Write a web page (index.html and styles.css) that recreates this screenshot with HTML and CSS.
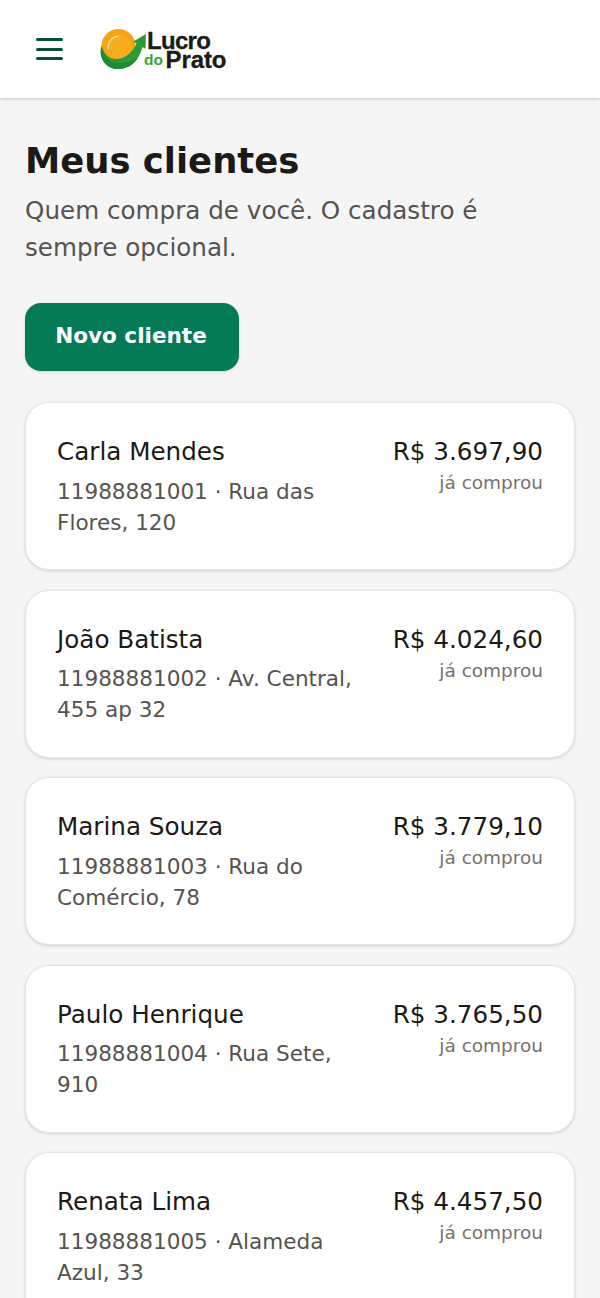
FILE: index.html
```html
<!DOCTYPE html>
<html lang="pt-BR">
<head>
  <meta charset="UTF-8" />
  <meta name="viewport" content="width=device-width, initial-scale=1.0"/>
  <title>Meus clientes</title>
  <link rel="stylesheet" href="styles.css">
</head>
<body>
  <header class="topbar">
    <button class="menu-btn" aria-label="Menu">
      <span></span><span></span><span></span>
    </button>
    <div class="logo">
      <svg class="logo-mark" viewBox="0 0 48 42" width="48" height="42" aria-hidden="true">
        <circle cx="19.5" cy="18" r="17" fill="#f6a313"/>
        <circle cx="20" cy="19" r="12.5" fill="#fbab1e"/>
        <path d="M9.5 21C8.5 14 13 8.5 20 8" fill="none" stroke="#fde3a4" stroke-width="1.2"/>
        <path d="M2.5 18C-1 30 7 41 19 41C31 41 40 33 43.5 19L46.5 21L47 6L34 13.7L37.5 15.5C33 25 26 31 17 31C10 31 5 26 2.5 18Z" fill="#2f9a36"/>
        <path d="M2.5 18C-1 30 7 41 19 41C28 41 34 37 39 30C32 34 20 37 12 33C7 30 4 25 2.5 18Z" fill="#1f8a34"/>
      </svg>
      <div class="logo-text">
        <div class="logo-top">Lucro</div>
        <div class="logo-bottom"><span class="logo-do">do</span>Prato</div>
      </div>
    </div>
  </header>

  <main class="page">
    <h1>Meus clientes</h1>
    <p class="subtitle">Quem compra de você. O cadastro é sempre opcional.</p>
    <button class="new-btn">Novo cliente</button>

    <div class="client-list">
      <div class="client-card">
        <div class="client-info">
          <div class="client-name">Carla Mendes</div>
          <div class="client-meta">11988881001 · Rua das Flores, 120</div>
        </div>
        <div class="client-total">
          <div class="total-value">R$ 3.697,90</div>
          <div class="total-label">já comprou</div>
        </div>
      </div>
      <div class="client-card">
        <div class="client-info">
          <div class="client-name">João Batista</div>
          <div class="client-meta">11988881002 · Av. Central, 455 ap 32</div>
        </div>
        <div class="client-total">
          <div class="total-value">R$ 4.024,60</div>
          <div class="total-label">já comprou</div>
        </div>
      </div>
      <div class="client-card">
        <div class="client-info">
          <div class="client-name">Marina Souza</div>
          <div class="client-meta">11988881003 · Rua do Comércio, 78</div>
        </div>
        <div class="client-total">
          <div class="total-value">R$ 3.779,10</div>
          <div class="total-label">já comprou</div>
        </div>
      </div>
      <div class="client-card">
        <div class="client-info">
          <div class="client-name">Paulo Henrique</div>
          <div class="client-meta">11988881004 · Rua Sete, 910</div>
        </div>
        <div class="client-total">
          <div class="total-value">R$ 3.765,50</div>
          <div class="total-label">já comprou</div>
        </div>
      </div>
      <div class="client-card">
        <div class="client-info">
          <div class="client-name">Renata Lima</div>
          <div class="client-meta">11988881005 · Alameda Azul, 33</div>
        </div>
        <div class="client-total">
          <div class="total-value">R$ 4.457,50</div>
          <div class="total-label">já comprou</div>
        </div>
      </div>
    </div>
  </main>
</body>
</html>
```

FILE: styles.css
```css
html, body {
  margin: 0;
  padding: 0;
  height: 1298px;
  overflow: hidden;
  font-family: 'DejaVu Sans', sans-serif;
  background: #f5f5f5;
  color: #1c1917;
}

.topbar {
  display: flex;
  align-items: center;
  gap: 36px;
  height: 98px;
  padding: 0 36px;
  background: #ffffff;
  box-shadow: 0 1px 3px rgba(0, 0, 0, 0.2);
}

.menu-btn {
  display: flex;
  flex-direction: column;
  gap: 6.5px;
  width: 27px;
  padding: 0;
  border: none;
  background: none;
}

.menu-btn span {
  display: block;
  height: 3px;
  border-radius: 2px;
  background: #064e3b;
}

.logo {
  display: flex;
  align-items: flex-start;
  height: 42px;
}

.logo-mark {
  flex-shrink: 0;
}

.logo-text {
  padding-top: 3px;
  font-family: 'Liberation Sans', sans-serif;
  font-weight: 700;
  font-size: 24px;
  line-height: 19px;
  color: #1b1b1b;
  -webkit-text-stroke: 0.3px #1b1b1b;
}

.logo-top {
  letter-spacing: -0.7px;
}

.logo-bottom {
  margin-left: -3px;
  letter-spacing: -0.1px;
}

.logo-do {
  margin-right: 2.6px;
  font-size: 15.5px;
  line-height: 1;
  letter-spacing: 0;
  vertical-align: 3px;
  color: #3aa335;
  -webkit-text-stroke: 0;
}

.page {
  padding: 40px 25px 0;
}

h1 {
  margin: 0;
  font-size: 35.42px;
  line-height: 46px;
  font-weight: 700;
}

.subtitle {
  margin: 8px 0 0;
  font-size: 24.64px;
  line-height: 37px;
  color: #57534e;
}

.new-btn {
  display: block;
  margin-top: 37px;
  padding: 0 2px 4px 0;
  width: 214px;
  height: 68px;
  border: none;
  border-radius: 16px;
  background: #057a57;
  color: #ffffff;
  font-family: inherit;
  font-size: 21.56px;
  font-weight: 700;
  box-shadow: 0 1px 3px rgba(0, 0, 0, 0.15);
}

.client-list {
  display: flex;
  flex-direction: column;
  gap: 19.6px;
  margin-top: 31px;
}

.client-card {
  display: flex;
  justify-content: space-between;
  gap: 24px;
  box-sizing: border-box;
  height: 168px;
  padding: 32px 31px 31px;
  background: #ffffff;
  border: 1px solid #e7e5e4;
  border-radius: 24px;
  box-shadow: 0 1px 3px rgba(0, 0, 0, 0.15);
}

.client-info {
  min-width: 0;
}

.client-name {
  font-size: 24.64px;
  line-height: 34px;
}

.client-meta {
  margin-top: 6.5px;
  font-size: 21.56px;
  line-height: 31px;
  color: #57534e;
}

.client-total {
  flex-shrink: 0;
  text-align: right;
}

.total-value {
  font-size: 24.64px;
  line-height: 34px;
}

.total-label {
  margin-top: 1px;
  font-size: 18.48px;
  line-height: 26px;
  color: #78716c;
}
```
